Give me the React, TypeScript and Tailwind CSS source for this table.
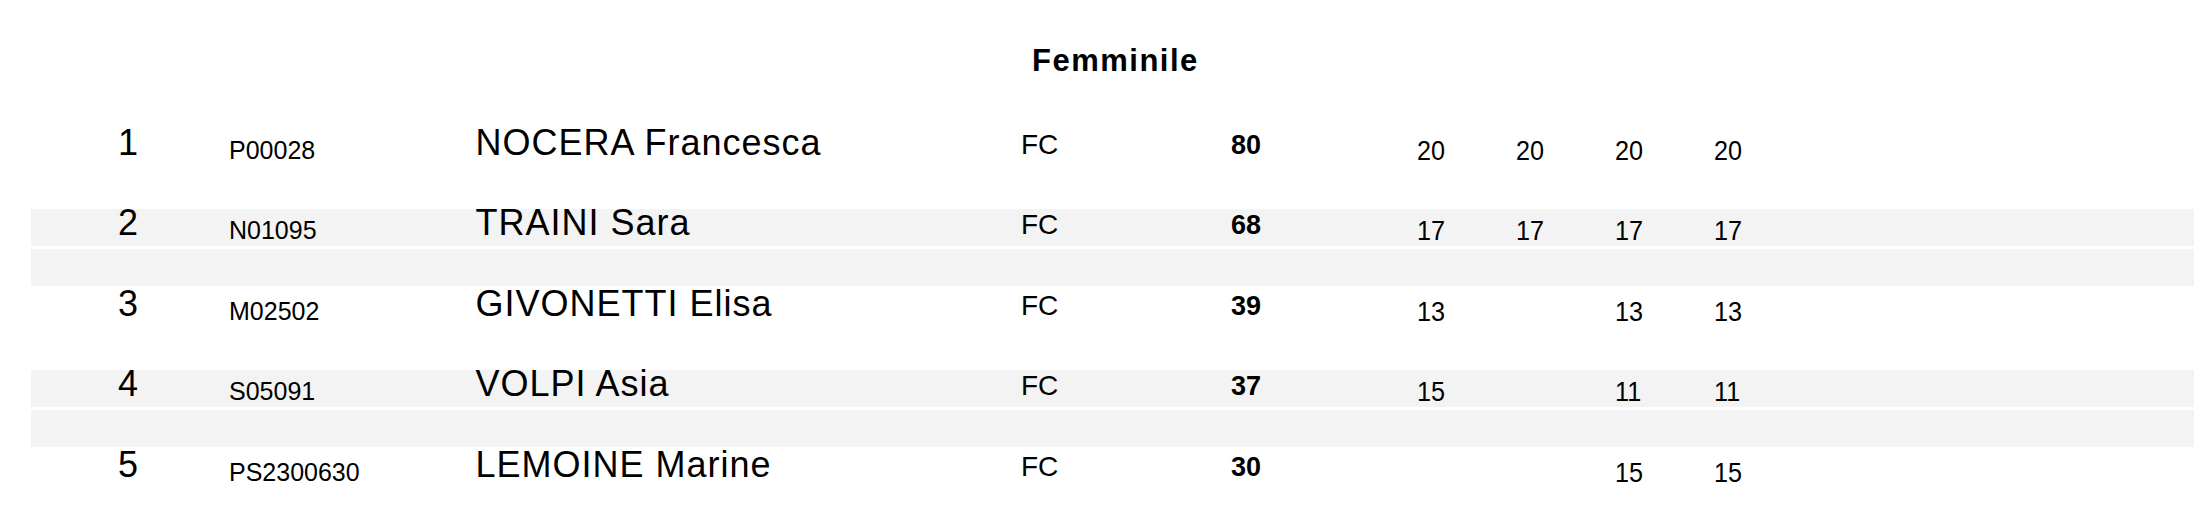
type Entry = {
  rank: number;
  code: string;
  name: string;
  cat: string;
  total: number;
  // per-round points, "" where the athlete didn't score
  rounds: string[];
};

const ENTRIES: Entry[] = [
  { rank: 1, code: "P00028", name: "NOCERA Francesca", cat: "FC", total: 80, rounds: ["20", "20", "20", "20"] },
  { rank: 2, code: "N01095", name: "TRAINI Sara", cat: "FC", total: 68, rounds: ["17", "17", "17", "17"] },
  { rank: 3, code: "M02502", name: "GIVONETTI Elisa", cat: "FC", total: 39, rounds: ["13", "", "13", "13"] },
  { rank: 4, code: "S05091", name: "VOLPI Asia", cat: "FC", total: 37, rounds: ["15", "", "11", "11"] },
  { rank: 5, code: "PS2300630", name: "LEMOINE Marine", cat: "FC", total: 30, rounds: ["", "", "15", "15"] },
];

function Row({ entry, shaded }: { entry: Entry; shaded: boolean }) {
  const band = shaded ? "bg-[#f3f3f3]" : "";
  return (
    <div className="flex h-[80.5px] flex-col">
      <div className={`flex h-[37px] items-start ${band}`}>
        <div className="ml-[87px] w-[111px] shrink-0 text-[36px] leading-[27px]">{entry.rank}</div>
        <div className="w-[246.5px] shrink-0 text-[25px] leading-[42.5px]">{entry.code}</div>
        <div className="w-[545.5px] shrink-0 whitespace-nowrap text-[36px] leading-[27px] tracking-[1px]">
          {entry.name}
        </div>
        <div className="w-[210px] shrink-0 text-[28px] leading-[32.5px]">{entry.cat}</div>
        <div className="w-[186px] shrink-0 text-[27px] font-bold leading-[32.5px]">{entry.total}</div>
        {entry.rounds.map((p, i) => (
          <div key={i} className="w-[99px] shrink-0 text-[28px] leading-[43px]">
            <span className="inline-block origin-left scale-x-90">{p}</span>
          </div>
        ))}
      </div>
      <div className={`mt-[3px] h-[37px] ${band}`} />
    </div>
  );
}

export default function App() {
  return (
    <div className="h-[519px] w-[2207px] overflow-hidden bg-white pt-[44.5px] font-['Liberation_Sans',Arial,sans-serif] text-black">
      <div className="h-[84px] pl-[1032px] text-[31px] font-bold leading-[31px] tracking-[1.5px]">Femminile</div>
      <div className="ml-[31px] flex w-[2163px] flex-col">
        {ENTRIES.map((e, i) => (
          <Row key={e.rank} entry={e} shaded={i % 2 === 1} />
        ))}
      </div>
    </div>
  );
}
